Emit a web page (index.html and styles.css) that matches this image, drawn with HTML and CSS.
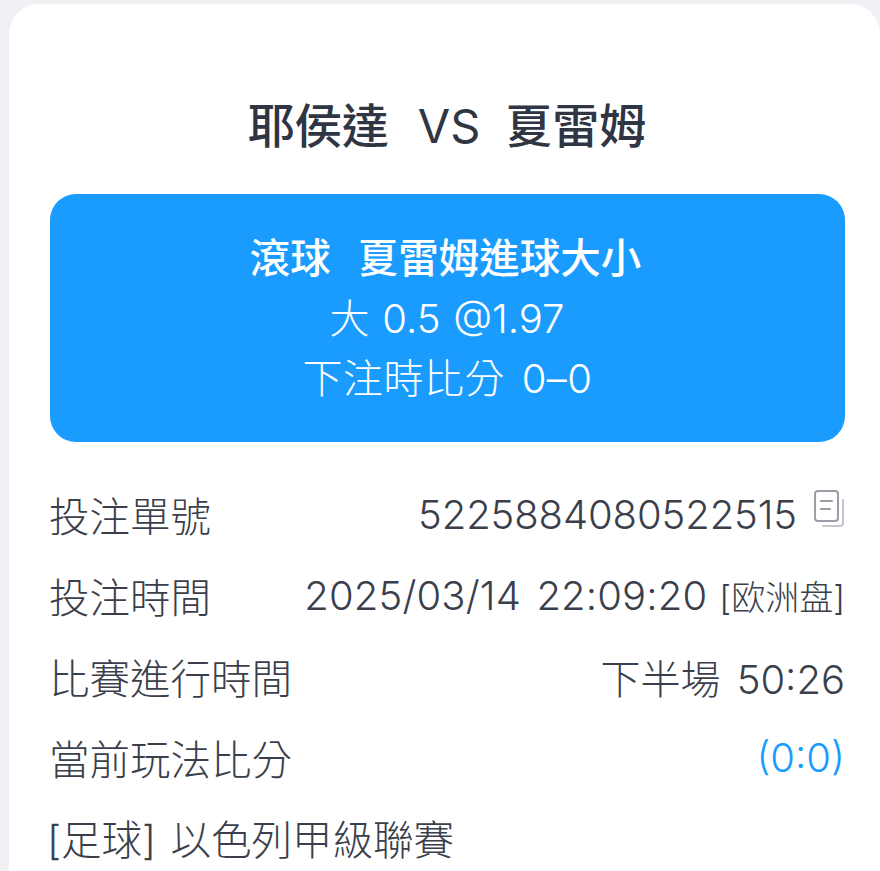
FILE: index.html
```html
<!DOCTYPE html>
<html lang="zh-Hant">
<head>
<meta charset="utf-8">
<title>投注詳情</title>
<link rel="stylesheet" href="styles.css">
</head>
<body>
<main class="card">
  <h1 class="title"><span>耶侯達</span><span class="vs">VS</span><span>夏雷姆</span></h1>
  <section class="bet">
    <div class="bet-head"><span>滾球</span><span>夏雷姆進球大小</span></div>
    <div class="bet-line">大 0.5 @1.97</div>
    <div class="bet-line">下注時比分 0–0</div>
  </section>
  <section class="rows">
    <div class="row">
      <span>投注單號</span>
      <span class="value"><span class="ticket">5225884080522515</span>
        <svg class="copy" width="32" height="40" viewBox="0 0 32 40" fill="none" aria-hidden="true">
          <rect x="2" y="2" width="23" height="30" rx="3" stroke="#9a9ea8" stroke-width="2"/>
          <path d="M8 12h11M8 20h9" stroke="#9a9ea8" stroke-width="2" stroke-linecap="round"/>
          <path d="M30 11v23a3 3 0 0 1-3 3H10" stroke="#c3c6cc" stroke-width="2" stroke-linecap="round"/>
        </svg>
      </span>
    </div>
    <div class="row">
      <span>投注時間</span>
      <span class="value"><span class="stamp">2025/03/14 22:09:20</span><span class="market">[欧洲盘]</span></span>
    </div>
    <div class="row">
      <span>比賽進行時間</span>
      <span class="value spaced">下半場 50:26</span>
    </div>
    <div class="row">
      <span>當前玩法比分</span>
      <span class="value score">(0:0)</span>
    </div>
    <div class="row league">[足球] 以色列甲級聯賽</div>
  </section>
</main>
</body>
</html>
```
FILE: styles.css
```css
* { box-sizing: border-box; }
html, body { height: 100%; }
body {
  margin: 0;
  height: 871px;
  overflow: hidden;
  background: #f0f0f5;
  color: #3a3f4b;
  font-family: "Inter", "Noto Sans CJK TC", sans-serif;
  padding: 4px 0 0 9px;
}
.card {
  height: 900px;
  background: #fff;
  border-radius: 30px;
  padding: 92px 35px 0 40px;
}
.title {
  margin: 0;
  display: flex;
  justify-content: center;
  gap: 29px;
  font-size: 47px;
  line-height: 60px;
  font-weight: 500;
  color: #2f3542;
}
.vs { font-size: 47px; font-weight: 400; margin-right: -4px; }
.bet {
  margin-top: 38px;
  margin-left: 1px;
  height: 248px;
  background: #1a9cff;
  border-radius: 26px;
  color: #fff;
  text-align: center;
  padding-top: 35px;
  font-size: 40px;
  line-height: 60px;
}
.bet-head {
  font-size: 40.5px;
  font-weight: 500;
  display: flex;
  justify-content: center;
  gap: 27px;
  padding-right: 4px;
}
.bet-line { font-weight: 300; word-spacing: 1.5px; padding-right: 1px; }
.bet-line + .bet-line { word-spacing: 5px; letter-spacing: 0.5px; padding-right: 0; }
.rows { margin-top: 32px; }
.row {
  display: flex;
  justify-content: space-between;
  align-items: center;
  height: 81px;
  font-size: 40.5px;
  font-weight: 300;
}
.value { display: flex; align-items: center; font-size: 40px; }
.ticket { letter-spacing: -0.1px; }
.copy { margin-left: 16px; margin-top: -12px; }
.stamp { letter-spacing: 0.15px; word-spacing: 4px; }
.market { font-size: 34px; margin-left: 12px; }
.spaced { word-spacing: 5px; }
.score { color: #1a9cff; }
.league { margin-left: -2px; word-spacing: 3px; margin-top: -1px; }
```
